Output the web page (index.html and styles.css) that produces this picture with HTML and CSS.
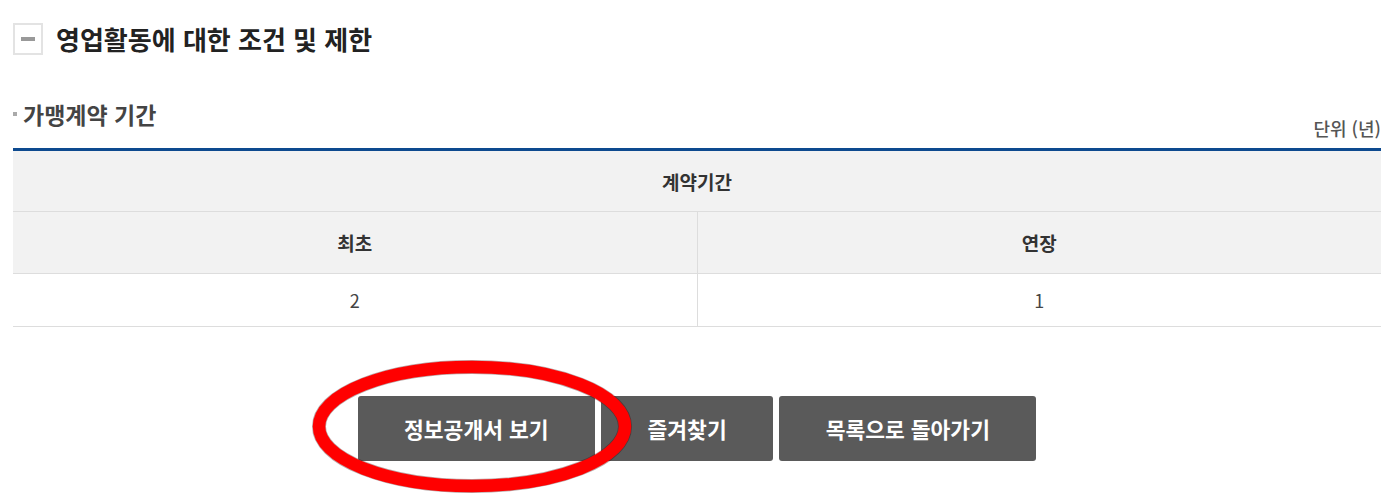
FILE: index.html
```html
<!DOCTYPE html>
<html lang="ko">
<head>
<meta charset="utf-8">
<title>영업활동에 대한 조건 및 제한</title>
<link rel="stylesheet" href="styles.css">
</head>
<body>
<div class="page">
  <div class="section-head">
    <span class="toggle"><span class="toggle-bar"></span></span>
    <h2 class="section-title">영업활동에 대한 조건 및 제한</h2>
  </div>

  <div class="sub-head">
    <h3 class="sub-title"><span class="bullet"></span>가맹계약 기간</h3>
    <span class="unit">단위 (년)</span>
  </div>

  <table class="data-table">
    <thead>
      <tr><th colspan="2" class="row-h1">계약기간</th></tr>
      <tr><th class="row-h2">최초</th><th class="row-h2">연장</th></tr>
    </thead>
    <tbody>
      <tr><td>2</td><td>1</td></tr>
    </tbody>
  </table>

  <div class="btn-area">
    <div class="btn-wrap">
      <a class="btn">정보공개서 보기</a>
      <svg class="mark" width="318" height="131" viewBox="0 0 318 131" aria-hidden="true">
        <ellipse cx="159" cy="65.5" rx="153" ry="59.5" fill="none" stroke="rgba(60,0,0,0.35)" stroke-width="14"/>
        <ellipse cx="159" cy="65.5" rx="153" ry="59.5" fill="none" stroke="#ff0000" stroke-width="12.5"/>
      </svg>
    </div>
    <a class="btn">즐겨찾기</a>
    <a class="btn">목록으로 돌아가기</a>
  </div>
</div>
</body>
</html>
```

FILE: styles.css
```css
* { box-sizing: border-box; }
html, body { margin: 0; padding: 0; background: #fff; }
body {
  font-family: "Noto Sans CJK KR", "Noto Sans", sans-serif;
  color: #333;
}
.page { padding: 23px 13px 40px 13px; }

.section-head {
  display: flex;
  align-items: center;
  height: 32px;
}
.toggle {
  width: 30px;
  height: 32px;
  border: 2px solid #e3e3e3;
  display: flex;
  align-items: center;
  justify-content: center;
  flex: none;
}
.toggle-bar { width: 14px; height: 4px; background: #999; }
.section-title {
  margin: 0 0 0 13px;
  font-size: 26px;
  font-weight: 700;
  color: #222;
  line-height: 32px;
}

.sub-head {
  display: flex;
  justify-content: space-between;
  align-items: flex-end;
  margin-top: 43px;
  height: 50px;
  padding-bottom: 9px;
}
.sub-title {
  margin: 0;
  align-self: flex-start;
  display: flex;
  align-items: center;
  font-size: 23px;
  font-weight: 700;
  color: #444;
  line-height: 32px;
}
.bullet { width: 4px; height: 4px; background: #aaa; margin-right: 6px; }
.unit { font-size: 18px; color: #555; font-weight: 500; line-height: 22px; }

.data-table {
  width: 100%;
  border-collapse: collapse;
  table-layout: fixed;
  border-top: 3px solid #0d4a8f;
}
.data-table th, .data-table td {
  border-bottom: 1px solid #ddd;
  text-align: center;
}
.data-table th + th, .data-table td + td { border-left: 1px solid #ddd; }
.data-table th { background: #f2f2f2; font-weight: 700; color: #333; font-size: 19px; }
.row-h1 { height: 62px; }
.row-h2 { height: 62px; }
.data-table td { height: 53px; color: #444; font-weight: 400; font-size: 18px; }

.btn-area {
  display: flex;
  justify-content: center;
  gap: 6px;
  margin-top: 69px;
}
.btn-wrap { position: relative; display: flex; }
.btn {
  display: flex;
  align-items: center;
  justify-content: center;
  height: 65px;
  padding: 0 46.5px;
  background: #5a5a5a;
  color: #fff;
  font-size: 21.5px;
  font-weight: 700;
  border-radius: 3px;
  text-decoration: none;
}
.mark {
  position: absolute;
  left: -45px;
  top: -35px;
  z-index: 2;
  overflow: visible;
  pointer-events: none;
}
```
